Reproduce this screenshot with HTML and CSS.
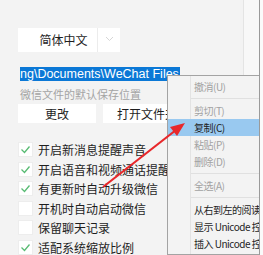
FILE: index.html
```html
<!DOCTYPE html>
<html lang="zh-CN">
<head>
  <meta charset="UTF-8">
  <title>通用设置</title>
  <link rel="stylesheet" href="styles.css">
</head>
<body>

  <div class="settings">
    <div class="lang-select">
      <span class="lang-value">简体中文</span>
      <span class="lang-arrow">
        <svg width="9" height="6" viewBox="0 0 9 6"><polyline points="1,1 4.5,4.5 8,1" fill="none" stroke="#d6d6d6" stroke-width="1"/></svg>
      </span>
    </div>

    <div class="path-sel">ng\Documents\WeChat Files</div>
    <div class="path-hint">微信文件的默认保存位置</div>

    <div class="btn-row">
      <button class="btn btn-change">更改</button>
      <button class="btn btn-open">打开文件夹</button>
    </div>

    <div class="options">
      <div class="option"><span class="box checked"></span>开启新消息提醒声音</div>
      <div class="option"><span class="box checked"></span>开启语音和视频通话提醒声音</div>
      <div class="option"><span class="box checked"></span>有更新时自动升级微信</div>
      <div class="option"><span class="box"></span>开机时自动启动微信</div>
      <div class="option"><span class="box"></span>保留聊天记录</div>
      <div class="option"><span class="box checked"></span>适配系统缩放比例</div>
    </div>
  </div>

  <div class="scroll-strip"></div>

  <!-- menú contextual del campo de texto -->
  <div class="ctx-menu">
    <div class="ctx-item off">撤消(U)</div>
    <div class="ctx-sep"></div>
    <div class="ctx-item off">剪切(T)</div>
    <div class="ctx-item active">复制(C)</div>
    <div class="ctx-item off">粘贴(P)</div>
    <div class="ctx-item off">删除(D)</div>
    <div class="ctx-sep"></div>
    <div class="ctx-item off">全选(A)</div>
    <div class="ctx-sep"></div>
    <div class="ctx-item">从右到左的阅读顺序(R)</div>
    <div class="ctx-item">显示 Unicode 控制字符(S)</div>
    <div class="ctx-item">插入 Unicode 控制字符(I)</div>
  </div>

  <div class="edge-line"></div>

  <svg class="pointer" width="263" height="255" viewBox="0 0 263 255">
    <line x1="103" y1="187" x2="176" y2="130" stroke="#e8282b" stroke-width="2.2"/>
    <polygon points="185,123 170,127 177,136" fill="#e8282b"/>
  </svg>

</body>
</html>
```

FILE: styles.css
```css
body {
  margin: 0;
  width: 263px;
  height: 255px;
  overflow: hidden;
  position: relative;
  background-color: #f3f3f3;
  font-family: "Noto Sans CJK SC", "Noto Sans", sans-serif;
  color: #1e1e1e;
}

.settings {
  padding: 28px 0 0 18px;
}

.lang-select {
  display: flex;
  width: 102px;
  height: 24px;
  background-color: #fff;
}

.lang-value {
  width: 67px;
  padding-left: 12px;
  border-right: 1px solid #ececec;
  font-size: 12px;
  line-height: 24px;
  text-align: center;
}

.lang-arrow {
  flex: 1;
  display: flex;
  align-items: center;
  justify-content: center;
  padding-bottom: 3px;
}

.path-sel {
  width: max-content;
  margin: 15px 0 0 2px;
  padding-right: 1px;
  background-color: #0b78d6;
  color: #fff;
  font-family: "Liberation Sans", Arial, sans-serif;
  font-size: 12.5px;
  line-height: 14px;
  height: 14px;
  white-space: nowrap;
}

.path-hint {
  margin-top: 6px;
  padding-left: 2px;
  color: #a4a4a4;
  font-size: 11px;
  line-height: 14px;
}

.btn-row {
  display: flex;
  gap: 7px;
  margin-top: 3px;
}

.btn {
  height: 19px;
  border: none;
  background-color: #fff;
  font-family: inherit;
  font-size: 12px;
  color: #1e1e1e;
  padding: 0;
}

.btn-change {
  width: 78px;
}

.btn-open {
  width: 80px;
  text-align: left;
  padding-left: 14px;
}

.options {
  margin-top: 17px;
}

.option {
  display: flex;
  align-items: center;
  height: 19.5px;
  font-size: 12px;
  white-space: nowrap;
}

.box {
  width: 13px;
  height: 13px;
  margin-right: 5px;
  background-color: #fff;
  border: 1px solid #ededed;
  flex-shrink: 0;
}

.box.checked {
  background: #fff url("data:image/svg+xml,%3Csvg xmlns='http://www.w3.org/2000/svg' width='13' height='13'%3E%3Cpolyline points='2.5,6.5 5.5,9.5 10.5,3.5' fill='none' stroke='%2358bb73' stroke-width='1.3'/%3E%3C/svg%3E") no-repeat center;
}

.scroll-strip {
  position: absolute;
  left: 243px;
  top: 0;
  width: 16px;
  height: 255px;
  background-color: #f8f8f8;
  border-left: 1px solid #e4e4e4;
}

.ctx-menu {
  position: absolute;
  left: 167px;
  top: 75px;
  width: 91px;
  padding: 2px 0;
  background-color: #f3f3f3;
  border: 1px solid #a3a3a3;
  border-right: none;
  overflow: hidden;
  font-size: 10px;
  letter-spacing: -0.5px;
  background-image: linear-gradient(#e3e3e3, #e3e3e3);
  background-size: 1px 100%;
  background-position: 22px 0;
  background-repeat: no-repeat;
}

.ctx-item {
  height: 17px;
  line-height: 17px;
  padding-left: 26px;
  white-space: nowrap;
  color: #1e1e1e;
}

.ctx-item.off {
  color: #a2a2a2;
}

.ctx-item.active {
  background-color: #99c9f0;
}

.ctx-sep {
  height: 7px;
  margin-left: 23px;
  background: linear-gradient(#e0e0e0, #e0e0e0) no-repeat 0 3px / 100% 1px;
}

.edge-line {
  position: absolute;
  left: 259px;
  top: 0;
  width: 1px;
  height: 255px;
  background-color: #9a9a9a;
}

.edge-line::after {
  content: "";
  position: absolute;
  left: 1px;
  top: 0;
  width: 3px;
  height: 255px;
  background-color: #fafafa;
}

.pointer {
  position: absolute;
  left: 0;
  top: 0;
}
```
